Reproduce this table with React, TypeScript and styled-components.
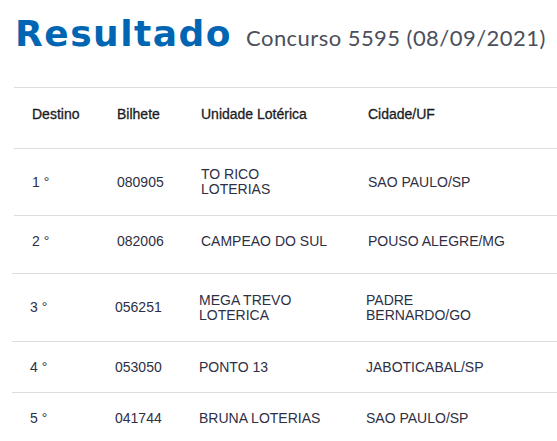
import React from "react";
import styled, { createGlobalStyle } from "styled-components";

const Global = createGlobalStyle`
  html, body { margin: 0; padding: 0; background: #ffffff; }
  body { font-family: "Liberation Sans", Arial, sans-serif; overflow: hidden; }
`;

const Page = styled.div`
  width: 557px;
  height: 441px;
  overflow: hidden;
  background: #fff;
`;

const TitleBar = styled.div`
  display: flex;
  align-items: baseline;
  gap: 14px;
  padding: 12px 0 0 15px;
  height: 87px;
  box-sizing: border-box;
`;

const Title = styled.h1`
  margin: 0;
  font-family: "DejaVu Sans", sans-serif;
  font-weight: 700;
  font-size: 36px;
  line-height: 44px;
  color: #0066b3;
  letter-spacing: 1.5px;
`;

const Subtitle = styled.span`
  font-family: "Lato", sans-serif;
  font-weight: 400;
  font-size: 22px;
  color: #4b4f5c;
  letter-spacing: 0.45px;
`;

const Table = styled.div`
  margin-left: 14px;
  display: flex;
  flex-direction: column;
`;

const Row = styled.div<{ $h: number; $lift?: number; $shift?: number }>`
  display: grid;
  grid-template-columns: 85px 84px 167px 1fr;
  align-items: center;
  box-sizing: border-box;
  height: ${(p) => p.$h}px;
  padding: 0 0 ${(p) => (p.$lift ?? 0) * 2}px 18px;
  margin-left: ${(p) => -(p.$shift ?? 0)}px;
  border-top: 1px solid #dcdde3;
`;

const HeadCell = styled.div`
  font-size: 14px;
  line-height: 16px;
  color: #1c1c24;
  -webkit-text-stroke: 0.3px #1c1c24;
`;

const Cell = styled.div<{ $wrap?: number }>`
  font-size: 14px;
  line-height: 15px;
  color: #2e2f45;
  max-width: ${(p) => (p.$wrap ? `${p.$wrap}px` : "none")};
`;

type Entry = {
  pos: string;
  ticket: string;
  unit: string;
  city: string;
  h: number;
  lift?: number;
  shift?: number;
};

const rows: Entry[] = [
  { pos: "1 °", ticket: "080905", unit: "TO RICO LOTERIAS", city: "SAO PAULO/SP", h: 67 },
  { pos: "2 °", ticket: "082006", unit: "CAMPEAO DO SUL", city: "POUSO ALEGRE/MG", h: 58, lift: 3 },
  { pos: "3 °", ticket: "056251", unit: "MEGA TREVO LOTERICA", city: "PADRE BERNARDO/GO", h: 68, shift: 2 },
  { pos: "4 °", ticket: "053050", unit: "PONTO 13", city: "JABOTICABAL/SP", h: 51, shift: 2 },
  { pos: "5 °", ticket: "041744", unit: "BRUNA LOTERIAS", city: "SAO PAULO/SP", h: 51, shift: 2 },
];

export default function App() {
  return (
    <Page>
      <Global />
      <TitleBar>
        <Title>Resultado</Title>
        <Subtitle>Concurso 5595 (08/09/2021)</Subtitle>
      </TitleBar>
      <Table>
        <Row $h={61} $lift={4}>
          <HeadCell>Destino</HeadCell>
          <HeadCell>Bilhete</HeadCell>
          <HeadCell>Unidade Lotérica</HeadCell>
          <HeadCell>Cidade/UF</HeadCell>
        </Row>
        {rows.map((r) => (
          <Row key={r.pos} $h={r.h} $lift={r.lift} $shift={r.shift}>
            <Cell>{r.pos}</Cell>
            <Cell>{r.ticket}</Cell>
            <Cell $wrap={128}>{r.unit}</Cell>
            <Cell $wrap={148}>{r.city}</Cell>
          </Row>
        ))}
      </Table>
    </Page>
  );
}
